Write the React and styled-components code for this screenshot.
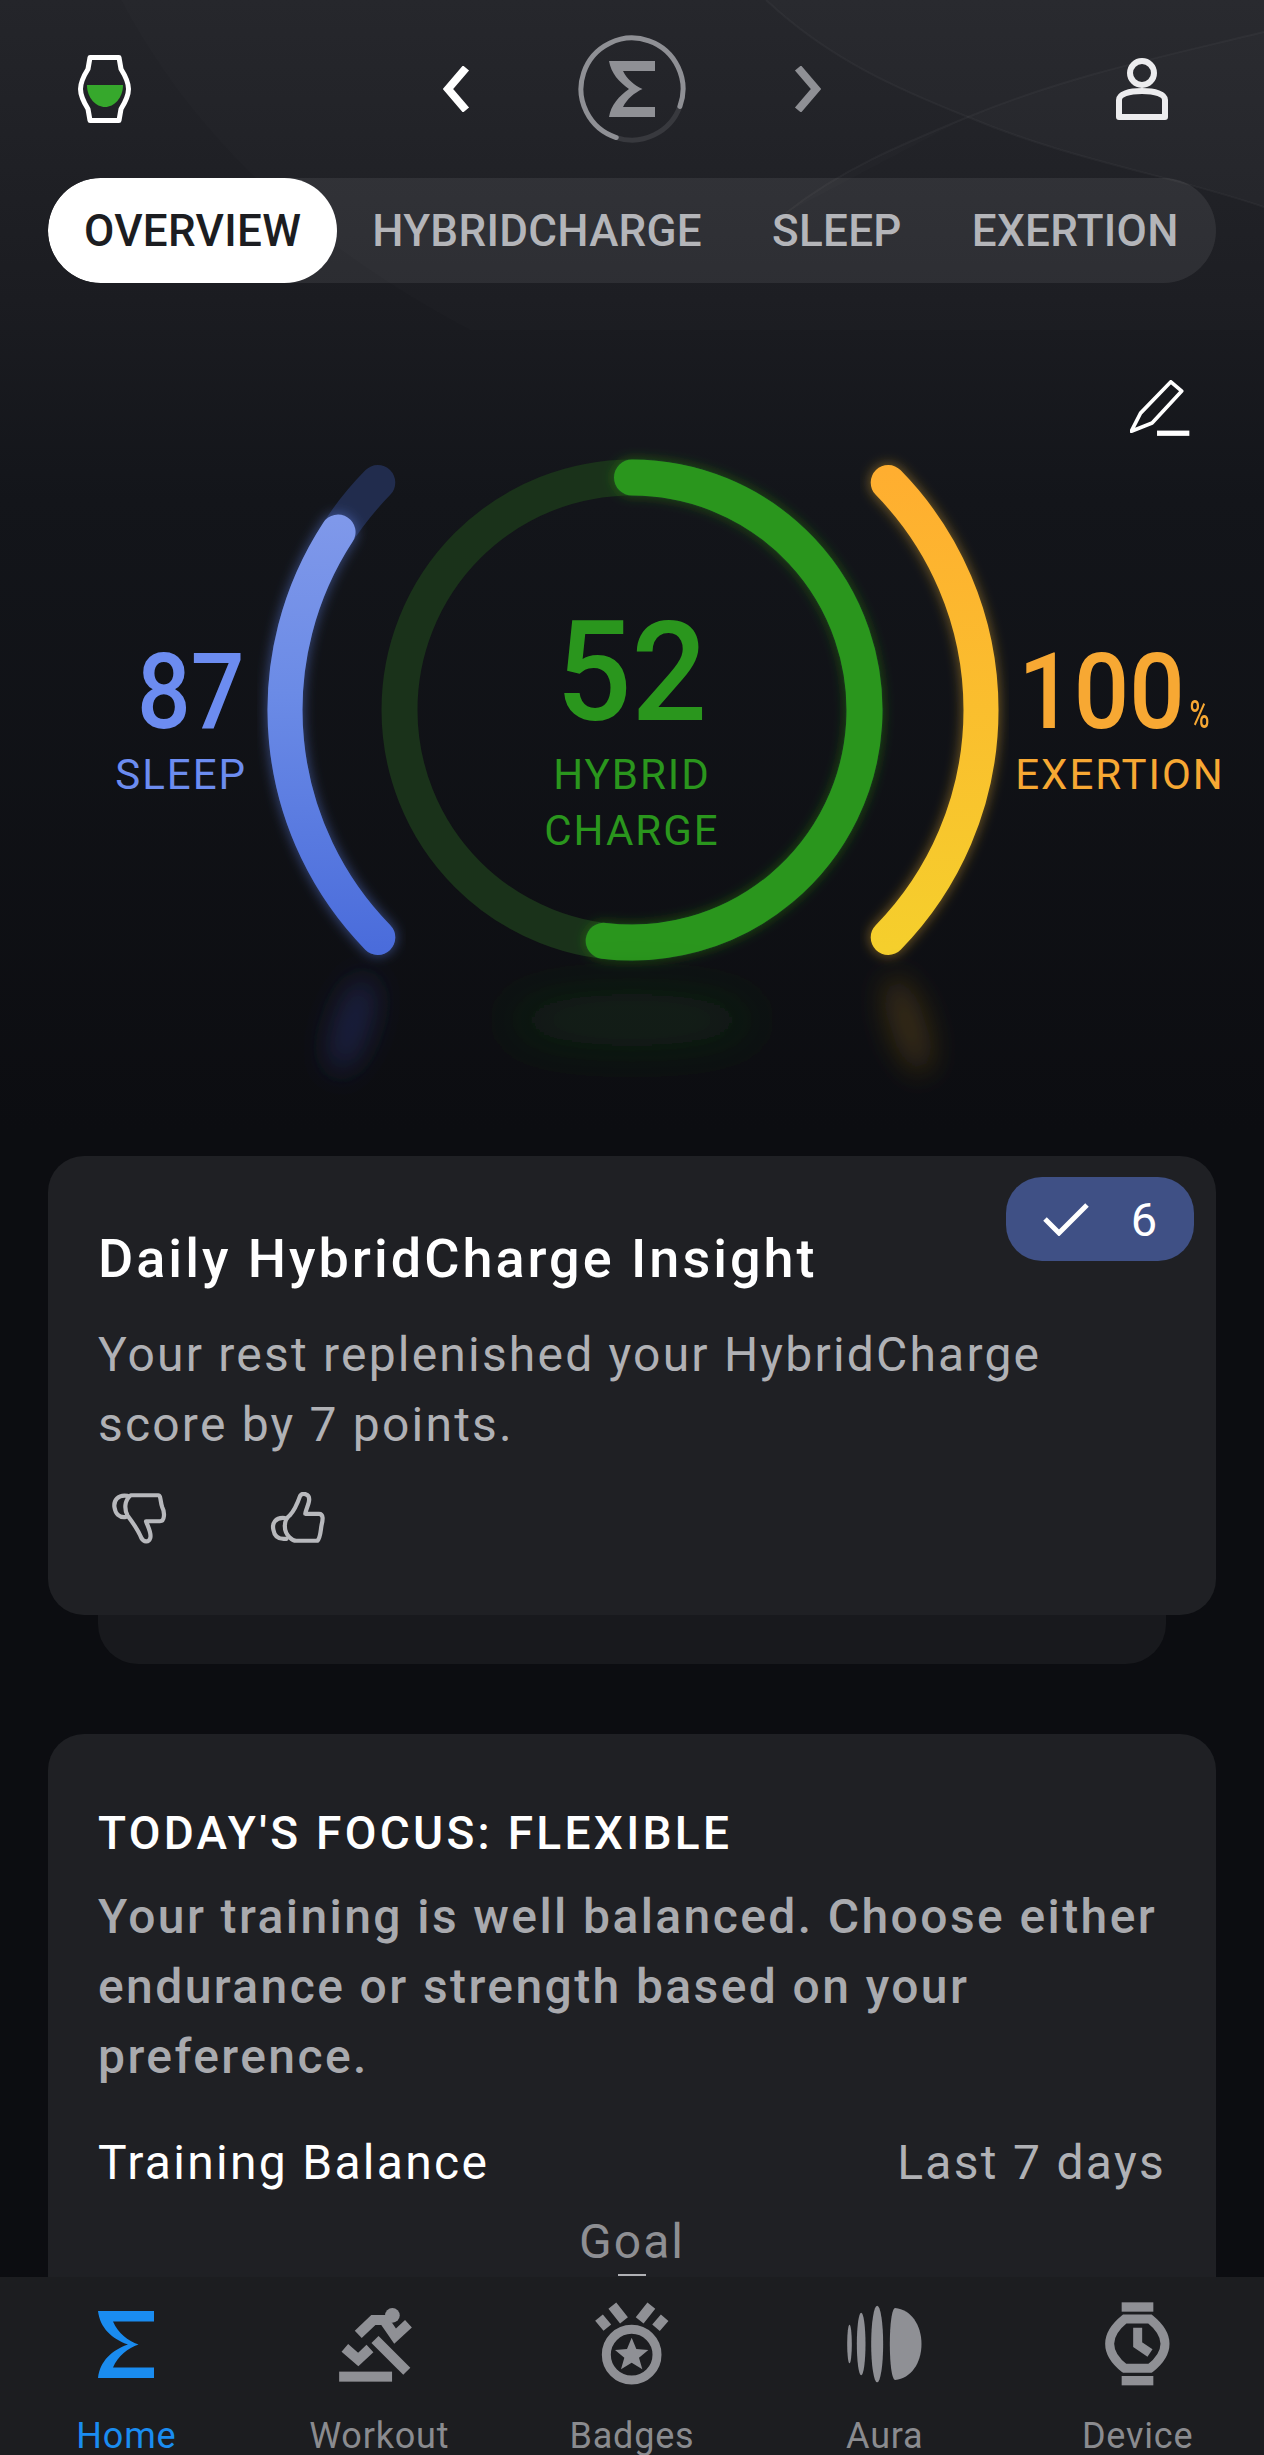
import React from "react";
import styled, { createGlobalStyle } from "styled-components";

const Global = createGlobalStyle`
  html, body { margin: 0; padding: 0; background: #0c0d11; }
  * { box-sizing: border-box; }
`;

const Screen = styled.div`
  position: relative;
  width: 1264px;
  height: 2455px;
  overflow: hidden;
  display: flex;
  flex-direction: column;
  font-family: Roboto, "Liberation Sans", sans-serif;
  color: #fff;
  background: linear-gradient(180deg, #24252a 0, #1b1c21 300px, #13151a 500px, #0c0d11 1130px, #0c0d11 100%);
`;

const Decor = styled.svg`
  position: absolute;
  left: 0;
  top: 0;
  pointer-events: none;
`;

const Main = styled.main`
  position: relative;
  flex: 1;
  min-height: 0;
  overflow: hidden;
`;

const Header = styled.header`
  height: 178px;
  display: grid;
  grid-template-columns: 1fr auto 1fr;
  align-items: center;
`;

const HeaderLeft = styled.div`
  display: flex;
  padding-left: 78px;
`;

const HeaderRight = styled.div`
  display: flex;
  justify-content: flex-end;
  padding-right: 96px;
`;

const HeaderCenter = styled.div`
  display: flex;
  align-items: center;
  gap: 108px;
`;

const Tabs = styled.nav`
  margin: 0 48px;
  height: 105px;
  border-radius: 53px;
  background: rgba(255, 255, 255, 0.075);
  display: flex;
  align-items: stretch;
  overflow: hidden;
`;

const Tab = styled.div`
  display: flex;
  align-items: center;
  padding: 0 ${(p) => (p.$active ? 36 : 35)}px;
  border-radius: 53px;
  font-size: 44px;
  font-weight: 500;
  letter-spacing: 0.3px;
  white-space: nowrap;
  background: ${(p) => (p.$active ? "#ffffff" : "transparent")};
  color: ${(p) => (p.$active ? "#1c1d21" : "#b4b5b9")};
`;

const EditRow = styled.div`
  margin-top: 97px;
  padding-right: 74px;
  height: 57px;
  display: flex;
  justify-content: flex-end;
`;

const Stage = styled.section`
  position: relative;
  height: 719px;
`;

const Chart = styled.svg`
  display: block;
`;

const Score = styled.div`
  position: absolute;
  top: ${(p) => p.$top}px;
  left: ${(p) => p.$left}px;
  width: ${(p) => p.$width}px;
  display: flex;
  flex-direction: column;
  align-items: ${(p) => p.$align};
  color: ${(p) => p.$color};
  text-align: center;
`;

const ScoreNumber = styled.div`
  font-size: ${(p) => p.$size}px;
  line-height: ${(p) => p.$size}px;
  font-weight: 500;
  white-space: nowrap;
  transform: translateX(${(p) => p.$shift || 0}px) scaleX(${(p) => p.$scale});
  transform-origin: ${(p) => p.$origin || "center"};
`;

const Percent = styled.span`
  display: inline-block;
  font-size: 38px;
  line-height: 38px;
  margin-left: 5px;
  margin-right: -3px;
  transform: scaleX(0.77);
  transform-origin: left bottom;
`;

const ScoreLabel = styled.div`
  margin-top: ${(p) => p.$gap || 0}px;
  font-size: 42px;
  line-height: 56px;
  letter-spacing: 2px;
  white-space: nowrap;
`;

const Card = styled.article`
  position: relative;
  margin: ${(p) => p.$gap || 0}px 48px 0;
  padding: ${(p) => p.$top}px 50px 0;
  height: ${(p) => p.$height}px;
  background: #1f2024;
  border-radius: 36px;
`;

const Peek = styled.div`
  margin: 0 98px;
  height: 49px;
  background: #18191d;
  border-radius: 0 0 40px 40px;
`;

const Badge = styled.div`
  position: absolute;
  top: 21px;
  right: 22px;
  width: 188px;
  height: 84px;
  border-radius: 36px;
  background: #3f5085;
  display: flex;
  align-items: center;
  justify-content: center;
  gap: 42px;
  font-size: 47px;
  font-weight: 400;
  color: #fff;
`;

const InsightTitle = styled.h2`
  margin: 0;
  font-size: 54px;
  line-height: 64px;
  font-weight: 500;
  letter-spacing: 3px;
  color: #fff;
`;

const InsightBody = styled.p`
  margin: 29px 0 0;
  font-size: 48px;
  line-height: 70px;
  letter-spacing: 2.2px;
  color: #b0b1b5;
`;

const Votes = styled.div`
  margin-top: 32px;
  padding-left: 14px;
  display: flex;
  gap: 103px;
`;

const FocusTitle = styled.h2`
  margin: 0;
  font-size: 46px;
  line-height: 60px;
  font-weight: 500;
  letter-spacing: 3.3px;
  color: #fff;
`;

const FocusBody = styled.p`
  margin: 19px 0 0;
  font-size: 48px;
  line-height: 70px;
  font-weight: 500;
  letter-spacing: 2.4px;
  color: #a9aaae;
`;

const BalanceRow = styled.div`
  margin-top: 41px;
  display: flex;
  justify-content: space-between;
  font-size: 48px;
  line-height: 60px;
  letter-spacing: 2.3px;
`;

const BalanceName = styled.span`
  color: #fff;
`;

const BalanceRange = styled.span`
  color: #b0b1b5;
`;

const Goal = styled.div`
  margin-top: 19px;
  font-size: 48px;
  line-height: 60px;
  text-align: center;
  letter-spacing: 2px;
  color: #8e8f93;
`;

const GoalTick = styled.div`
  width: 28px;
  height: 2px;
  margin: 2px auto 0;
  background: #b0b1b5;
`;

const BottomNav = styled.footer`
  flex: none;
  height: 178px;
  background: #1c1d20;
  display: grid;
  grid-template-columns: repeat(5, 1fr);
  overflow: hidden;
`;

const NavItem = styled.div`
  padding-top: 23px;
  display: flex;
  flex-direction: column;
  align-items: center;
  color: ${(p) => (p.$active ? "#1a8cf0" : "#8a8b8f")};
`;

const NavIconBox = styled.div`
  height: 88px;
  display: flex;
  align-items: center;
  justify-content: center;
`;

const NavLabel = styled.div`
  margin-top: 25px;
  font-size: 36px;
  line-height: 46px;
  letter-spacing: 0.8px;
  white-space: nowrap;
`;

const GRAY = "#8f9095";
const CX = 632;
const CY = 710;

const arc = (cx, r, a0, a1) => {
  const pt = (a) => {
    const t = ((a - 90) * Math.PI) / 180;
    return [cx + r * Math.cos(t), CY + r * Math.sin(t)];
  };
  const [x0, y0] = pt(a0);
  const [x1, y1] = pt(a1);
  const large = a1 - a0 > 180 ? 1 : 0;
  return `M${x0} ${y0}A${r} ${r} 0 ${large} 1 ${x1} ${y1}`;
};

const SIGMA =
  "M0 0H56V10.5H15C20 22 30 30 40.5 33.5C30 37 20 45 15 56.5H56V67H0C2 50 14 39 30 33.5C14 28 2 17 0 0Z";

const WatchIcon = () => (
  <svg width="53" height="68" viewBox="0 0 53 68" fill="none">
    <path
      d="M12 2.5H41L43 14C48 22 50.5 28 50.5 34C50.5 40 48 46 43 54L41 65.5H12L10 54C5 46 2.5 40 2.5 34C2.5 28 5 22 10 14Z"
      stroke="#fff"
      strokeWidth="5"
      strokeLinejoin="round"
    />
    <path d="M9 30H45C45 43 36 52 27 52C18 52 9 43 9 30Z" fill="#36a82c" />
  </svg>
);

const Chevron = ({ left, color }) => (
  <svg width="27" height="46" viewBox="0 0 27 46" fill="none">
    <path d={left ? "M23 2L5 23L23 44" : "M4 2L22 23L4 44"} stroke={color} strokeWidth="8" />
  </svg>
);

const SigmaRing = () => {
  const r = 51;
  const p = (a) => {
    const t = ((a - 90) * Math.PI) / 180;
    return [54 + r * Math.cos(t), 54 + r * Math.sin(t)];
  };
  const [x0, y0] = p(198);
  const [x1, y1] = p(110);
  return (
    <svg width="108" height="108" viewBox="0 0 108 108" fill="none">
      <path d={`M${x1} ${y1}A${r} ${r} 0 0 1 ${x0} ${y0}`} stroke="#38393e" strokeWidth="5" />
      <path d={`M${x0} ${y0}A${r} ${r} 0 1 1 ${x1} ${y1}`} stroke={GRAY} strokeWidth="5" strokeLinecap="round" />
      <g transform="translate(31 26)">
        <path d="M0 0H46V10H14C18 18 25 24 33.5 28C25 32 18 38 14 46H46V56H0C2 44 10 35 20 28C10 21 2 12 0 0Z" fill={GRAY} />
      </g>
    </svg>
  );
};

const PersonIcon = () => (
  <svg width="52" height="62" viewBox="0 0 52 62" fill="none" stroke="#ececee" strokeWidth="6">
    <circle cx="26" cy="15" r="12" />
    <path d="M3 59V42C3 36 13 33 26 33C39 33 49 36 49 42V59Z" strokeLinejoin="round" />
  </svg>
);

const PencilIcon = () => (
  <svg width="60" height="57" viewBox="118 55 182 172" fill="none">
    <path d="M122 210L150 155L242 60L275 88L185 185Z" stroke="#fff" strokeWidth="11" strokeLinejoin="round" />
    <rect x="200" y="208" width="98" height="16" fill="#fff" />
  </svg>
);

const CheckIcon = () => (
  <svg width="46" height="34" viewBox="0 0 46 34" fill="none">
    <path d="M2 17L16 31L44 3" stroke="#fff" strokeWidth="5" />
  </svg>
);

const ThumbDown = () => (
  <svg width="55" height="52" viewBox="68 38 168 160" fill="none" stroke="#b8b9bd" strokeWidth="13" strokeLinecap="round" strokeLinejoin="round">
    <path d="M115 50C85 45 72 65 75 85C78 105 90 118 110 115" />
    <path d="M125 48H210C218 48 216 70 222 85C230 100 230 128 215 128H172C178 145 190 165 185 180C180 195 165 192 158 180C148 155 130 130 115 110C105 90 105 65 125 48Z" />
  </svg>
);

const ThumbUp = () => (
  <svg width="55" height="52" viewBox="540 38 168 160" fill="none" stroke="#b8b9bd" strokeWidth="13" strokeLinecap="round" strokeLinejoin="round">
    <path d="M585 118C555 115 545 135 550 155C553 175 565 185 590 182" />
    <path d="M600 178C580 160 580 125 600 110C615 95 625 70 632 50C640 38 660 45 660 60C660 75 650 90 648 105H690C705 105 702 125 698 140C695 155 695 180 685 188H620C610 188 605 183 600 178Z" />
  </svg>
);

const HomeIcon = () => (
  <svg width="56" height="67" viewBox="0 0 56 67">
    <path d={SIGMA} fill="currentColor" />
  </svg>
);

const WorkoutIcon = () => (
  <svg width="82" height="77" viewBox="835 45 244 230" fill="none" stroke="#8f9095" strokeWidth="30">
    <circle cx="997" cy="73" r="22" fill="#8f9095" stroke="none" />
    <path d="M895 130L940 87H972L1005 135L1045 98" />
    <path d="M945 145L1040 240" />
    <path d="M855 170L895 205L930 172" />
    <rect x="838" y="241" width="158" height="30" fill="#8f9095" stroke="none" />
  </svg>
);

const BadgeIcon = () => (
  <svg width="75" height="84" viewBox="70 35 225 252" fill="none" stroke="#8f9095" strokeWidth="30">
    <circle cx="183" cy="193" r="76" strokeWidth="27" />
    <path d="M85 82L110 112M125 46L160 90M242 46L207 90M282 82L256 112" />
    <path d="M183 142L197 176L233 179L205 202L215 237L183 217L151 237L161 202L133 179L169 176Z" fill="#8f9095" stroke="none" />
  </svg>
);

const AuraIcon = () => (
  <svg width="77" height="78" viewBox="832 45 228 234" fill="#8f9095">
    <ellipse cx="841" cy="162" rx="7" ry="58" />
    <ellipse cx="876" cy="162" rx="13" ry="94" />
    <ellipse cx="924" cy="162" rx="18" ry="115" />
    <path d="M978 54C1025 58 1057 105 1057 162C1057 220 1025 265 978 270C968 270 962 220 962 162C962 105 968 54 978 54Z" />
  </svg>
);

const DeviceIcon = () => (
  <svg width="65" height="84" viewBox="193 37 195 252" fill="none" stroke="#8f9095" strokeWidth="27">
    <rect x="243" y="38" width="95" height="28" fill="#8f9095" stroke="none" />
    <rect x="243" y="259" width="95" height="28" fill="#8f9095" stroke="none" />
    <path d="M252 88H328C355 110 373 135 373 162C373 190 355 215 328 236H252C225 215 207 190 207 162C207 135 225 110 252 88Z" />
    <path d="M291 114V165L328 190" />
  </svg>
);

const NAV = [
  { label: "Home", Icon: HomeIcon, active: true },
  { label: "Workout", Icon: WorkoutIcon },
  { label: "Badges", Icon: BadgeIcon },
  { label: "Aura", Icon: AuraIcon },
  { label: "Device", Icon: DeviceIcon },
];

const LEFT_CX = 610;
const RIGHT_CX = 656;
const SIDE_R = 325;

const GaugeChart = () => (
  <Chart width="1264" height="719" viewBox="0 437 1264 719" fill="none">
    <defs>
      <linearGradient id="blue" gradientUnits="userSpaceOnUse" x1="0" y1="520" x2="0" y2="950">
        <stop offset="0" stopColor="#7f98ea" />
        <stop offset="0.4" stopColor="#6b8be6" />
        <stop offset="1" stopColor="#4a6cdb" />
      </linearGradient>
      <linearGradient id="yellow" gradientUnits="userSpaceOnUse" x1="0" y1="470" x2="0" y2="950">
        <stop offset="0" stopColor="#ffae30" />
        <stop offset="1" stopColor="#f5cf2c" />
      </linearGradient>
      <filter id="glow" x="-30%" y="-30%" width="160%" height="160%">
        <feGaussianBlur stdDeviation="6" />
      </filter>
      <filter id="reflect" x="-150%" y="-100%" width="400%" height="300%">
        <feGaussianBlur stdDeviation="14" />
      </filter>
      <filter id="reflectWide" x="-80%" y="-200%" width="260%" height="500%">
        <feGaussianBlur stdDeviation="24" />
      </filter>
    </defs>

    <path d={arc(LEFT_CX, SIDE_R, 225.6, 314.4)} stroke="#212c4d" strokeWidth="35" strokeLinecap="round" />
    <path d={arc(LEFT_CX, SIDE_R, 225.6, 303.2)} stroke="#5f80e6" strokeOpacity="0.45" strokeWidth="38" strokeLinecap="round" filter="url(#glow)" />
    <path d={arc(LEFT_CX, SIDE_R, 225.6, 303.2)} stroke="url(#blue)" strokeWidth="35" strokeLinecap="round" />

    <path d={arc(RIGHT_CX, SIDE_R, 45.6, 134.4)} stroke="#f7b92c" strokeOpacity="0.4" strokeWidth="38" strokeLinecap="round" filter="url(#glow)" />
    <path d={arc(RIGHT_CX, SIDE_R, 45.6, 134.4)} stroke="url(#yellow)" strokeWidth="35" strokeLinecap="round" />

    <circle cx={CX} cy={CY} r="232.5" stroke="#1a321a" strokeWidth="36" />
    <path d={arc(CX, 232.5, 0, 187)} stroke="#2ca41f" strokeOpacity="0.4" strokeWidth="38" strokeLinecap="round" filter="url(#glow)" />
    <path d={arc(CX, 232.5, 0, 187)} stroke="#2a961d" strokeWidth="36" strokeLinecap="round" />

    <ellipse cx="352" cy="1025" rx="18" ry="50" transform="rotate(18 352 1025)" fill="#2a3a80" fillOpacity="0.42" filter="url(#reflect)" />
    <ellipse cx="908" cy="1025" rx="18" ry="50" transform="rotate(-18 908 1025)" fill="#7a5a14" fillOpacity="0.38" filter="url(#reflect)" />
    <ellipse cx="632" cy="1020" rx="125" ry="26" fill="#1b4a1b" fillOpacity="0.36" filter="url(#reflectWide)" />
  </Chart>
);

export default function App() {
  return (
    <Screen>
      <Global />
      <Decor width="1264" height="330" viewBox="0 0 1264 330" fill="none">
        <path d="M121 0C190 130 300 240 470 330H1264V0Z" fill="#fff" fillOpacity="0.012" />
        <path d="M766 0C830 60 900 90 968 117C1070 160 1170 175 1264 207V0Z" fill="#fff" fillOpacity="0.014" />
        <path d="M786 213C840 170 900 145 968 117C1070 75 1170 55 1264 32V207C1170 175 1070 160 968 117Z" fill="#fff" fillOpacity="0.01" />
        <path d="M766 0C830 60 900 90 968 117C1070 160 1170 175 1264 207" stroke="#fff" strokeOpacity="0.035" strokeWidth="2" />
        <path d="M786 213C840 170 900 145 968 117C1070 75 1170 55 1264 32" stroke="#fff" strokeOpacity="0.035" strokeWidth="2" />
      </Decor>
      <Main>
        <Header>
          <HeaderLeft>
            <WatchIcon />
          </HeaderLeft>
          <HeaderCenter>
            <Chevron left color="#ffffff" />
            <SigmaRing />
            <Chevron color={GRAY} />
          </HeaderCenter>
          <HeaderRight>
            <PersonIcon />
          </HeaderRight>
        </Header>

        <Tabs>
          <Tab $active>OVERVIEW</Tab>
          <Tab>HYBRIDCHARGE</Tab>
          <Tab>SLEEP</Tab>
          <Tab>EXERTION</Tab>
        </Tabs>

        <EditRow>
          <PencilIcon />
        </EditRow>

        <Stage>
          <GaugeChart />
          <Score $top={203} $left={60} $width={187} $align="flex-end" $color="#6c8cf0">
            <ScoreNumber $size={105} $scale={0.9} $shift={-3} $origin="right">87</ScoreNumber>
            <ScoreLabel $gap={2}>SLEEP</ScoreLabel>
          </Score>
          <Score $top={165} $left={432} $width={400} $align="center" $color="#2a961d">
            <ScoreNumber $size={140} $scale={0.95}>52</ScoreNumber>
            <ScoreLabel $gap={5}>HYBRID</ScoreLabel>
            <ScoreLabel>CHARGE</ScoreLabel>
          </Score>
          <Score $top={203} $left={1000} $width={240} $align="center" $color="#f7a833">
            <ScoreNumber $size={105} $scale={0.93} $shift={-4}>
              100<Percent>%</Percent>
            </ScoreNumber>
            <ScoreLabel $gap={2}>EXERTION</ScoreLabel>
          </Score>
        </Stage>

        <Card $top={71} $height={459}>
          <Badge>
            <CheckIcon />
            <span>6</span>
          </Badge>
          <InsightTitle>Daily HybridCharge Insight</InsightTitle>
          <InsightBody>
            Your rest replenished your HybridCharge
            <br />
            score by 7 points.
          </InsightBody>
          <Votes>
            <ThumbDown />
            <ThumbUp />
          </Votes>
        </Card>
        <Peek />

        <Card $gap={70} $top={69} $height={640}>
          <FocusTitle>TODAY'S FOCUS: FLEXIBLE</FocusTitle>
          <FocusBody>
            Your training is well balanced. Choose either
            <br />
            endurance or strength based on your
            <br />
            preference.
          </FocusBody>
          <BalanceRow>
            <BalanceName>Training Balance</BalanceName>
            <BalanceRange>Last 7 days</BalanceRange>
          </BalanceRow>
          <Goal>Goal</Goal>
          <GoalTick />
        </Card>
      </Main>

      <BottomNav>
        {NAV.map(({ label, Icon, active }) => (
          <NavItem key={label} $active={active}>
            <NavIconBox>
              <Icon />
            </NavIconBox>
            <NavLabel>{label}</NavLabel>
          </NavItem>
        ))}
      </BottomNav>
    </Screen>
  );
}
